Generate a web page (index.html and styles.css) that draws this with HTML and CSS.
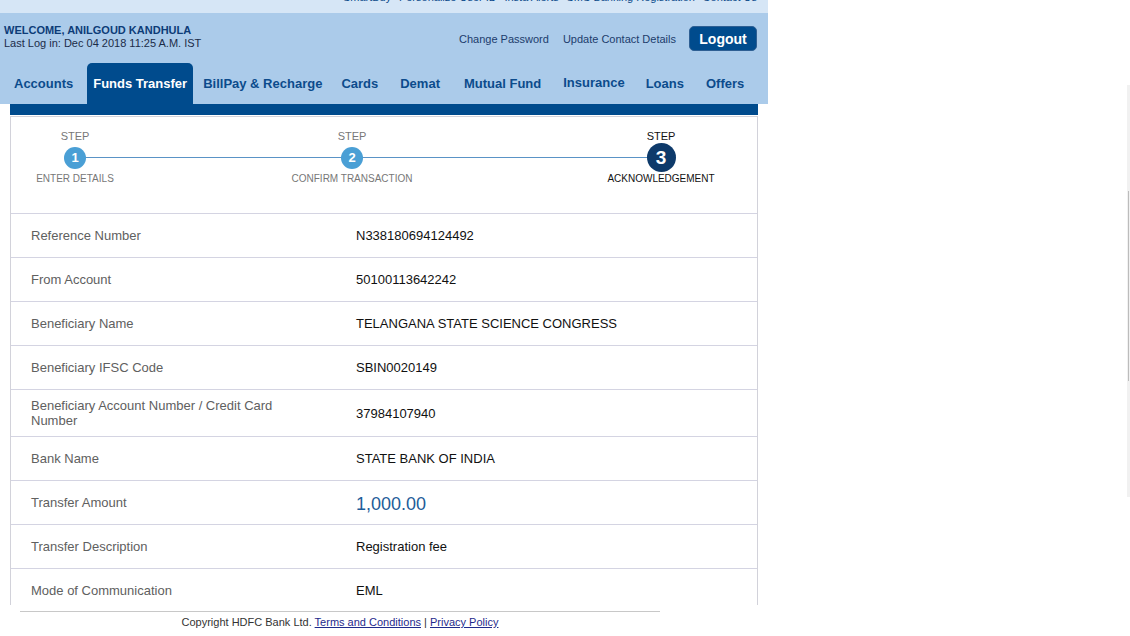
FILE: index.html
```html
<!DOCTYPE html>
<html lang="en">
<head>
<meta charset="utf-8">
<title>Funds Transfer - Acknowledgement</title>
<link rel="stylesheet" href="styles.css">
</head>
<body>
<div class="page">
  <div class="topstrip">
    <div class="toplinks">
      <span>SmartBuy</span><span class="dot">·</span><span>Personalize User ID</span><span class="dot">·</span><span>Insta Alerts</span><span class="dot">·</span><span>SMS Banking Registration</span><span class="dot">·</span><span>Contact Us</span>
    </div>
  </div>
  <header class="header">
    <div class="header-top">
      <div class="welcome">
        <div class="welcome-name">WELCOME, ANILGOUD KANDHULA</div>
        <div class="welcome-last">Last Log in: Dec 04 2018 11:25 A.M. IST</div>
      </div>
      <div class="acct-links">
        <a class="acct-link">Change Password</a>
        <a class="acct-link">Update Contact Details</a>
        <button class="logout">Logout</button>
      </div>
    </div>
    <nav class="nav">
      <a class="tab">Accounts</a>
      <a class="tab active">Funds Transfer</a>
      <a class="tab">BillPay &amp; Recharge</a>
      <a class="tab">Cards</a>
      <a class="tab">Demat</a>
      <a class="tab">Mutual Fund</a>
      <a class="tab tab-up">Insurance</a>
      <a class="tab">Loans</a>
      <a class="tab">Offers</a>
    </nav>
  </header>
  <main class="content">
    <div class="bar"></div>
    <section class="card">
      <div class="stepper">
        <div class="step done">
          <div class="step-title">STEP</div>
          <div class="circle-row"><span class="circle">1</span></div>
          <div class="step-label">ENTER DETAILS</div>
        </div>
        <div></div>
        <div class="step done">
          <div class="step-title">STEP</div>
          <div class="circle-row"><span class="circle">2</span></div>
          <div class="step-label">CONFIRM TRANSACTION</div>
        </div>
        <div></div>
        <div class="step current">
          <div class="step-title">STEP</div>
          <div class="circle-row"><span class="circle">3</span></div>
          <div class="step-label">ACKNOWLEDGEMENT</div>
        </div>
      </div>
      <div class="row"><div class="label">Reference Number</div><div class="value">N338180694124492</div></div>
      <div class="row"><div class="label">From Account</div><div class="value">50100113642242</div></div>
      <div class="row"><div class="label">Beneficiary Name</div><div class="value">TELANGANA STATE SCIENCE CONGRESS</div></div>
      <div class="row"><div class="label">Beneficiary IFSC Code</div><div class="value">SBIN0020149</div></div>
      <div class="row"><div class="label">Beneficiary Account Number / Credit Card Number</div><div class="value">37984107940</div></div>
      <div class="row"><div class="label">Bank Name</div><div class="value">STATE BANK OF INDIA</div></div>
      <div class="row"><div class="label">Transfer Amount</div><div class="value amount">1,000.00</div></div>
      <div class="row"><div class="label">Transfer Description</div><div class="value">Registration fee</div></div>
      <div class="row"><div class="label">Mode of Communication</div><div class="value">EML</div></div>
      <div class="row"><div class="label">&nbsp;</div><div class="value">&nbsp;</div></div>
    </section>
  </main>
  <footer class="footer">
    Copyright HDFC Bank Ltd. <a class="flink">Terms and Conditions</a> | <a class="flink">Privacy Policy</a>
  </footer>
</div>
<div class="scrolltrack"><div class="scrollthumb"></div></div>
</body>
</html>
```
FILE: styles.css
```css
* { box-sizing: border-box; }
html, body { margin: 0; padding: 0; background: #ffffff; }
body {
  font-family: "Liberation Sans", Arial, sans-serif;
  color: #111;
  position: relative;
  height: 636px;
  overflow: hidden;
}
.page { width: 768px; }

.topstrip {
  height: 13px;
  background: #d6e6f6;
  overflow: hidden;
  display: flex;
  justify-content: flex-end;
  padding-right: 11px;
}
.toplinks {
  margin-top: -9px;
  font-size: 11px;
  line-height: 13px;
  color: #0b4a8a;
  display: flex;
  gap: 2px;
  white-space: nowrap;
}
.toplinks .dot { color: #0b4a8a; }

.header { background: #abcbea; height: 91px; }
.header-top {
  height: 50px;
  display: flex;
  justify-content: space-between;
  align-items: flex-start;
  padding: 11px 11px 0 4px;
}
.welcome { font-size: 11px; line-height: 13px; }
.welcome-name { font-weight: bold; color: #0d3c78; }
.welcome-last { color: #1b2b48; }
.acct-links {
  display: flex;
  align-items: center;
  margin-top: 2px;
}
.acct-link {
  font-size: 11px;
  color: #1c3c6c;
  margin-right: 14px;
}
.acct-link + .acct-link { margin-right: 13px; }
.logout {
  width: 68px;
  height: 25px;
  border: 1px solid #2e5f93;
  border-radius: 5px;
  background: #004b8d;
  color: #fff;
  font-family: "Liberation Sans", Arial, sans-serif;
  font-weight: bold;
  font-size: 14px;
  padding: 0;
}

.nav {
  height: 41px;
  display: flex;
  align-items: stretch;
  padding: 0 0 0 8px;
}
.tab {
  display: flex;
  align-items: center;
  padding: 0 6px 1px;
  font-size: 13px;
  font-weight: bold;
  color: #0c4b8c;
  white-space: nowrap;
}
.tab:nth-child(2) { margin-left: 8px; }
.tab:nth-child(3) { margin-left: 4px; }
.tab:nth-child(4) { margin-left: 7px; }
.tab:nth-child(5) { margin-left: 10px; }
.tab:nth-child(6) { margin-left: 12px; }
.tab:nth-child(7) { margin-left: 10px; }
.tab:nth-child(8) { margin-left: 9px; }
.tab:nth-child(9) { margin-left: 10px; }
.tab-up { padding-bottom: 3px; }
.tab.active {
  background: #004b8d;
  color: #fff;
  border-radius: 5px 5px 0 0;
}

.content { height: 501px; overflow: hidden; }
.bar {
  height: 11px;
  width: 748px;
  margin: 0 0 1px 10px;
  background: #004b8d;
}
.card {
  width: 748px;
  margin-left: 10px;
  border: 1px solid #d2d2da;
}

.stepper {
  position: relative;
  display: grid;
  grid-template-columns: 128px 149px 128px 181px 128px;
  padding: 13px 0 28px 0;
}
.stepper::before {
  content: "";
  position: absolute;
  left: 64px;
  width: 586px;
  top: 40px;
  height: 1px;
  background: #5a93c6;
}
.step {
  display: flex;
  flex-direction: column;
  align-items: center;
  position: relative;
}
.step-title { font-size: 11px; line-height: 13px; color: #777; }
.circle-row {
  height: 29px;
  display: flex;
  align-items: center;
  justify-content: center;
}
.circle {
  width: 22px;
  height: 22px;
  border-radius: 50%;
  background: #4a9fd5;
  color: #fff;
  font-weight: bold;
  font-size: 13px;
  display: flex;
  align-items: center;
  justify-content: center;
}
.step-label { font-size: 10px; line-height: 12px; padding-top: 1px; color: #777; white-space: nowrap; }
.step.current .step-title, .step.current .step-label { color: #111; }
.step.current .circle {
  width: 29px;
  height: 29px;
  background: #0e3a6a;
  font-size: 19px;
}

.row {
  display: grid;
  grid-template-columns: 325px 1fr;
  align-items: center;
  min-height: 44px;
  padding: 8px 20px;
  border-top: 1px solid #d4d4e2;
  font-size: 13px;
  line-height: 15px;
}
.label { color: #606060; padding-right: 55px; }
.value { color: #111; }
.value.amount { color: #1d5c99; font-size: 18px; line-height: 20px; padding-top: 3px; }

.footer {
  width: 640px;
  margin: 6px 0 0 20px;
  border-top: 1px solid #c8c8c8;
  padding-top: 4px;
  text-align: center;
  font-size: 11px;
  line-height: 13px;
  color: #333;
}
.flink { color: #1f2a8c; text-decoration: underline; }

.scrolltrack {
  position: absolute;
  left: 1127px;
  top: 85px;
  width: 3px;
  height: 412px;
  background: #f1f1f1;
}
.scrollthumb {
  margin-top: 106px;
  margin-left: 1px;
  width: 1px;
  height: 190px;
  background: #bcbcbc;
}
```
